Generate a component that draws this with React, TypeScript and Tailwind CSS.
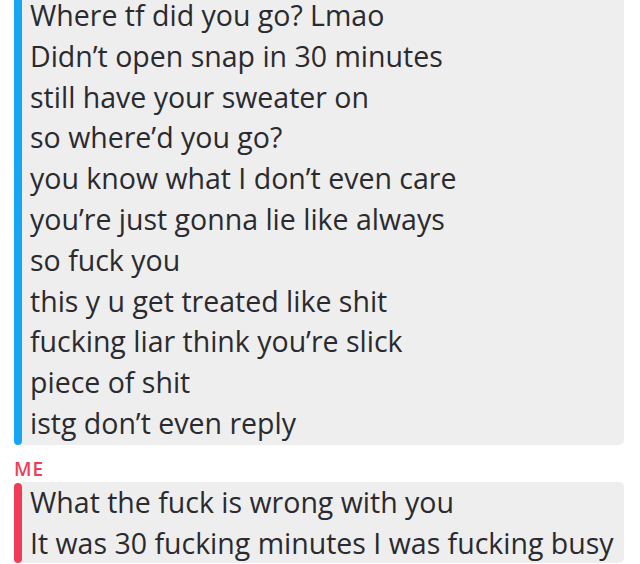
import React from "react";

const theirs = [
  "Where tf did you go? Lmao",
  "Didn\u2019t open snap in 30 minutes",
  "still have your sweater on",
  "so where\u2019d you go?",
  "you know what I don\u2019t even care",
  "you\u2019re just gonna lie like always",
  "so fuck you",
  "this y u get treated like shit",
  "fucking liar think you\u2019re slick",
  "piece of shit",
  "istg don\u2019t even reply",
];

const mine = [
  "What the fuck is wrong with you",
  "It was 30 fucking minutes I was fucking busy",
];

export default function App() {
  return (
    <div
      className="w-[640px] h-[564px] overflow-hidden bg-white pl-[14px] pr-[16px]"
      style={{ fontFamily: "'Open Sans', 'Noto Sans', sans-serif", fontVariantLigatures: "none" }}
    >
      <div className="flex mt-[-5px]">
        <div className="w-[8px] rounded-[4px] bg-[#17a6f3]" />
        <div className="flex-1 bg-[#eeeeee] rounded-r-[5px] pl-[8px] pb-[1px]">
          {theirs.map((t) => (
            <div key={t} className="text-[28.5px] leading-[40.8px] text-[#2a2a2f] whitespace-nowrap">
              {t}
            </div>
          ))}
        </div>
      </div>
      <div className="mt-[15px] mb-[5px] text-[19px] leading-[18px] tracking-[1px] font-semibold text-[#f23c57]">
        ME
      </div>
      <div className="flex">
        <div className="w-[8px] rounded-[4px] bg-[#f23c57]" />
        <div className="flex-1 bg-[#eeeeee] rounded-r-[5px] pl-[8px] mt-[-1px]">
          {mine.map((t) => (
            <div key={t} className="text-[28.5px] leading-[40.8px] text-[#2a2a2f] whitespace-nowrap">
              {t}
            </div>
          ))}
        </div>
      </div>
    </div>
  );
}
